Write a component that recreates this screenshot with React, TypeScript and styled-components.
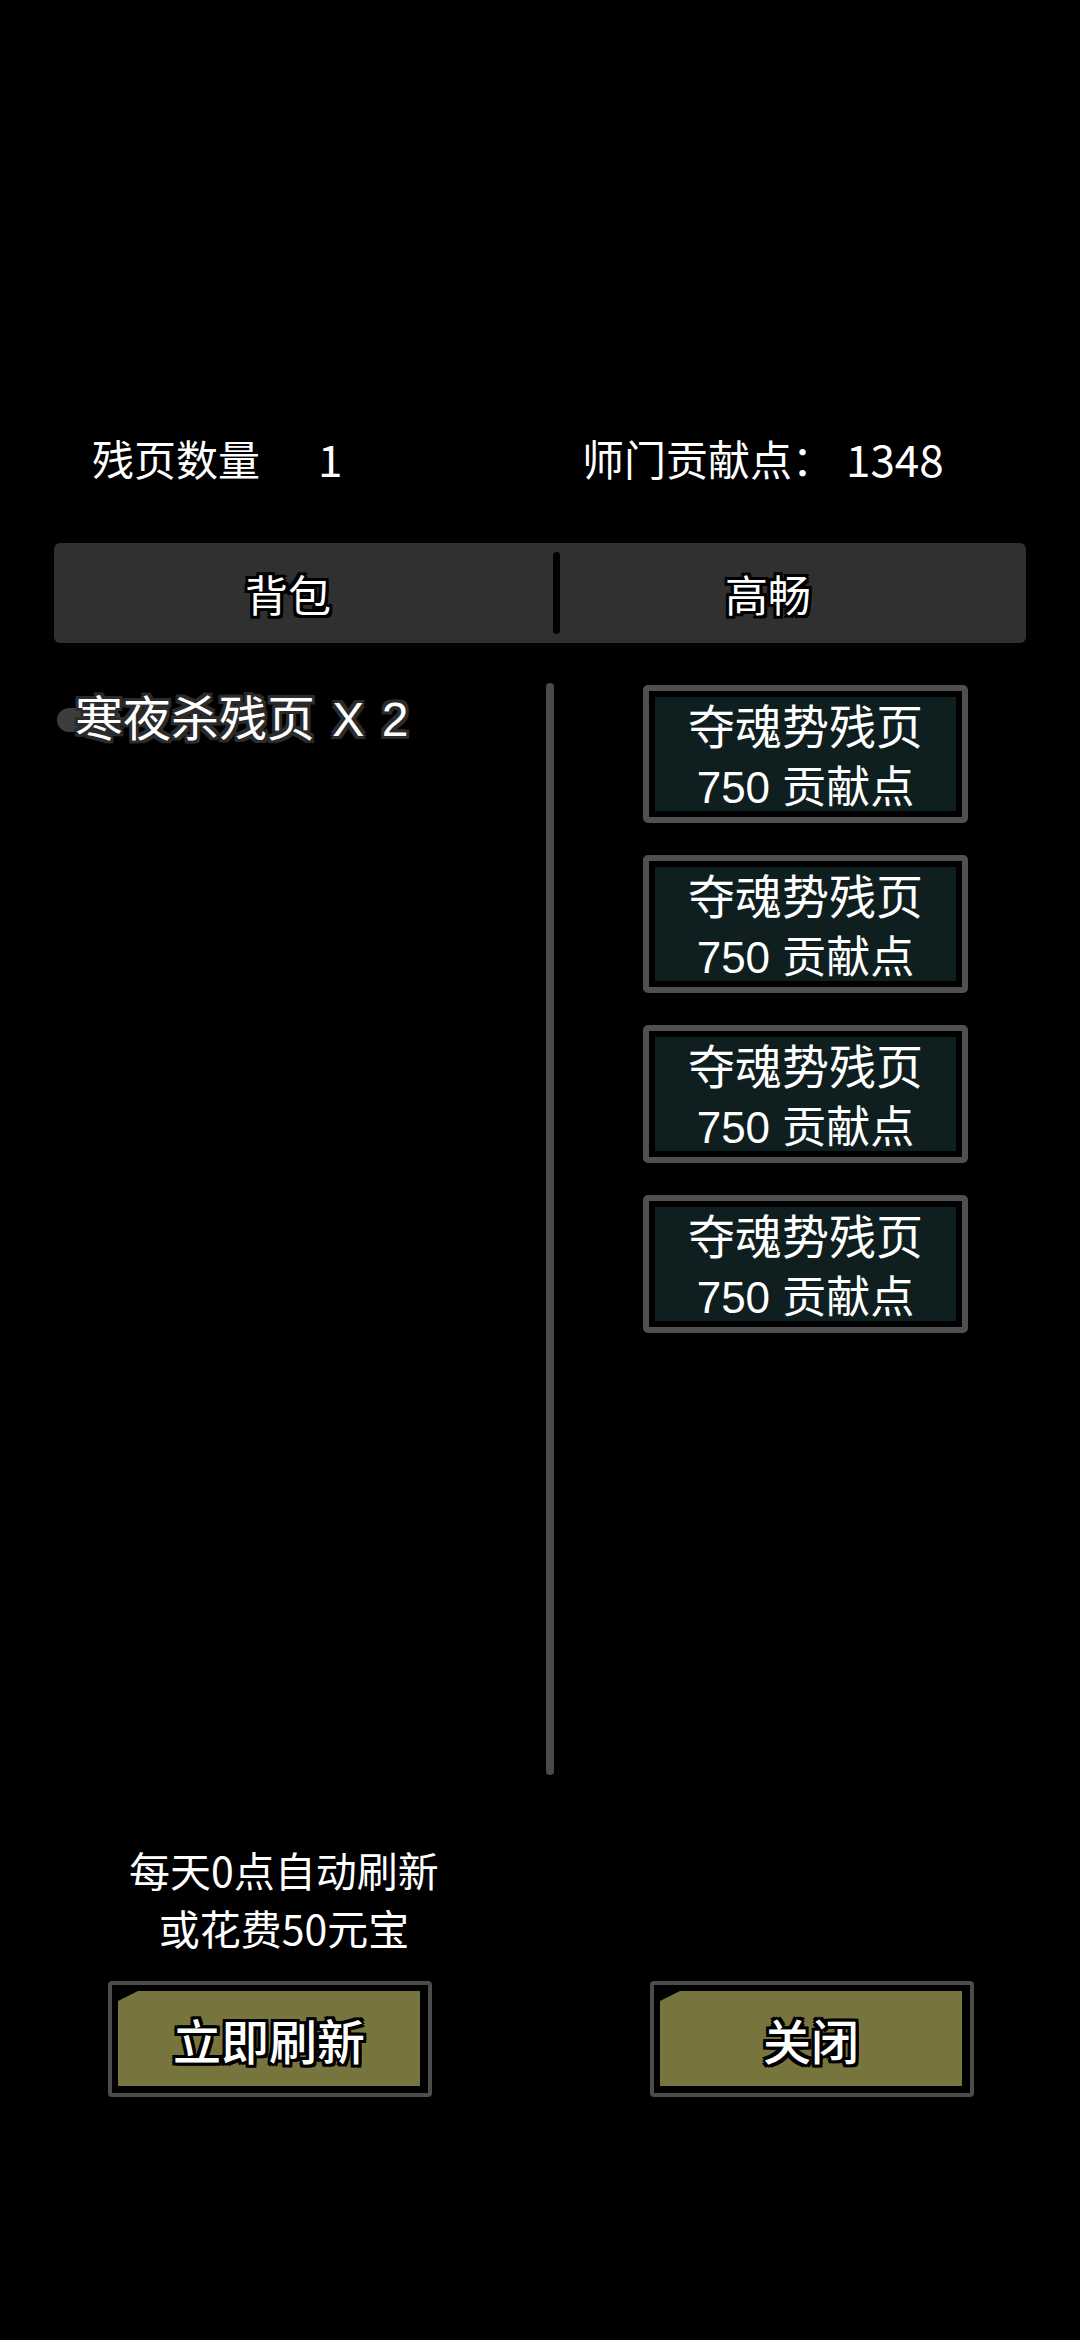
import * as React from "react";
import styled, { createGlobalStyle } from "styled-components";

const GlobalStyle = createGlobalStyle`
  html, body {
    margin: 0;
    padding: 0;
    background: #000000;
  }
  body {
    font-family: "Noto Sans CJK SC", "Noto Sans", sans-serif;
    color: #ffffff;
  }
`;

const latinFirst = `"Liberation Sans", "Noto Sans CJK SC", sans-serif`;

const outline = (c: string, w: number) =>
  [
    `${w}px 0 0 ${c}`,
    `-${w}px 0 0 ${c}`,
    `0 ${w}px 0 ${c}`,
    `0 -${w}px 0 ${c}`,
    `${w}px ${w}px 0 ${c}`,
    `-${w}px ${w}px 0 ${c}`,
    `${w}px -${w}px 0 ${c}`,
    `-${w}px -${w}px 0 ${c}`,
  ].join(", ");

const Page = styled.div`
  width: 1080px;
  min-height: 2340px;
  background: #000000;
  display: flex;
  flex-direction: column;
`;

const StatRow = styled.div`
  margin-top: 428px;
  height: 60px;
  padding-left: 92px;
  display: grid;
  grid-template-columns: 490px 1fr;
  font-size: 42px;
  line-height: 60px;
`;

const Stat = styled.div<{ $gap: number }>`
  display: flex;
  gap: ${(p) => p.$gap}px;
  white-space: nowrap;
`;

const StatValue = styled.span`
  font-size: 44px;
`;

const TabBar = styled.div`
  margin: 55px 54px 0;
  height: 100px;
  background: #303030;
  border-radius: 6px;
  display: flex;
  align-items: center;
`;

const Tab = styled.div<{ $width: number; $padRight: number }>`
  width: ${(p) => p.$width}px;
  box-sizing: border-box;
  padding-right: ${(p) => p.$padRight}px;
  text-align: center;
  font-size: 43px;
  line-height: 100px;
  text-shadow: ${outline("#000", 3)};
`;

const TabDivider = styled.div`
  width: 7px;
  height: 82px;
  background: #000000;
  border-radius: 4px;
`;

const Content = styled.div`
  margin-top: 40px;
  height: 1092px;
  display: flex;
`;

const Bag = styled.div`
  width: 492px;
  padding-left: 54px;
`;

const BagItem = styled.div`
  position: relative;
  isolation: isolate;
  padding: 7px 0 0 21px;
  font-family: ${latinFirst};
  font-size: 48px;
  line-height: 60px;
  word-spacing: 4px;
  text-shadow: ${outline("#2b2b2b", 3)};
  white-space: nowrap;

  &::before {
    content: "";
    position: absolute;
    left: 3px;
    top: 25px;
    width: 64px;
    height: 24px;
    border-radius: 12px;
    background: #3c3c3c;
    z-index: -1;
  }
`;

const ScrollTrack = styled.div`
  width: 8px;
  height: 100%;
  background: #4a4a4a;
  border-radius: 4px;
`;

const Shop = styled.div`
  padding: 2px 0 0 89px;
  display: flex;
  flex-direction: column;
  gap: 32px;
`;

const ShopCard = styled.div`
  width: 325px;
  height: 138px;
  box-sizing: border-box;
  border: 6px solid #505050;
  border-radius: 5px;
  background: #000000;
  padding: 6px;
`;

const ShopFill = styled.div`
  height: 100%;
  box-sizing: border-box;
  padding-top: 8px;
  background: #0f1f1f;
  display: flex;
  flex-direction: column;
  align-items: center;
  justify-content: center;
  font-family: ${latinFirst};
`;

const ShopLine = styled.div<{ $size: number }>`
  font-size: ${(p) => p.$size}px;
  line-height: 60px;
  white-space: nowrap;
`;

const Note = styled.div`
  margin: 65px 0 0 84px;
  width: 400px;
  text-align: center;
  font-size: 41px;
  line-height: 58px;
`;

const ButtonRow = styled.div`
  margin-top: 25px;
  padding-left: 108px;
  display: flex;
  gap: 218px;
`;

const ActionButton = styled.div`
  width: 324px;
  height: 116px;
  box-sizing: border-box;
  border: 4px solid #4c4c4c;
  border-radius: 4px;
  background: #000000;
  padding: 6px 8px 7px 6px;
`;

const ActionFill = styled.div`
  height: 100%;
  background: #77743d;
  clip-path: polygon(20px 0, 100% 0, 100% 100%, 0 100%, 0 10px);
  display: flex;
  align-items: center;
  justify-content: center;
  font-size: 48px;
  font-weight: 500;
  text-shadow: ${outline("#000", 3)};
`;

const shopItems = Array.from({ length: 4 }, () => ({
  name: "夺魂势残页",
  price: "750 贡献点",
}));

const App: React.FC = () => {
  return (
    <Page>
      <GlobalStyle />
      <StatRow>
        <Stat $gap={58}>
          <span>残页数量</span>
          <StatValue>1</StatValue>
        </Stat>
        <Stat $gap={12}>
          <span>师门贡献点：</span>
          <StatValue>1348</StatValue>
        </Stat>
      </StatRow>

      <TabBar>
        <Tab $width={499} $padRight={31}>
          背包
        </Tab>
        <TabDivider />
        <Tab $width={466} $padRight={50}>
          高畅
        </Tab>
      </TabBar>

      <Content>
        <Bag>
          <BagItem>寒夜杀残页 X 2</BagItem>
        </Bag>
        <ScrollTrack />
        <Shop>
          {shopItems.map((item, i) => (
            <ShopCard key={i}>
              <ShopFill>
                <ShopLine $size={47}>{item.name}</ShopLine>
                <ShopLine $size={44}>{item.price}</ShopLine>
              </ShopFill>
            </ShopCard>
          ))}
        </Shop>
      </Content>

      <Note>
        每天0点自动刷新
        <br />
        或花费50元宝
      </Note>

      <ButtonRow>
        <ActionButton>
          <ActionFill>立即刷新</ActionFill>
        </ActionButton>
        <ActionButton>
          <ActionFill>关闭</ActionFill>
        </ActionButton>
      </ButtonRow>
    </Page>
  );
};

export default App;
